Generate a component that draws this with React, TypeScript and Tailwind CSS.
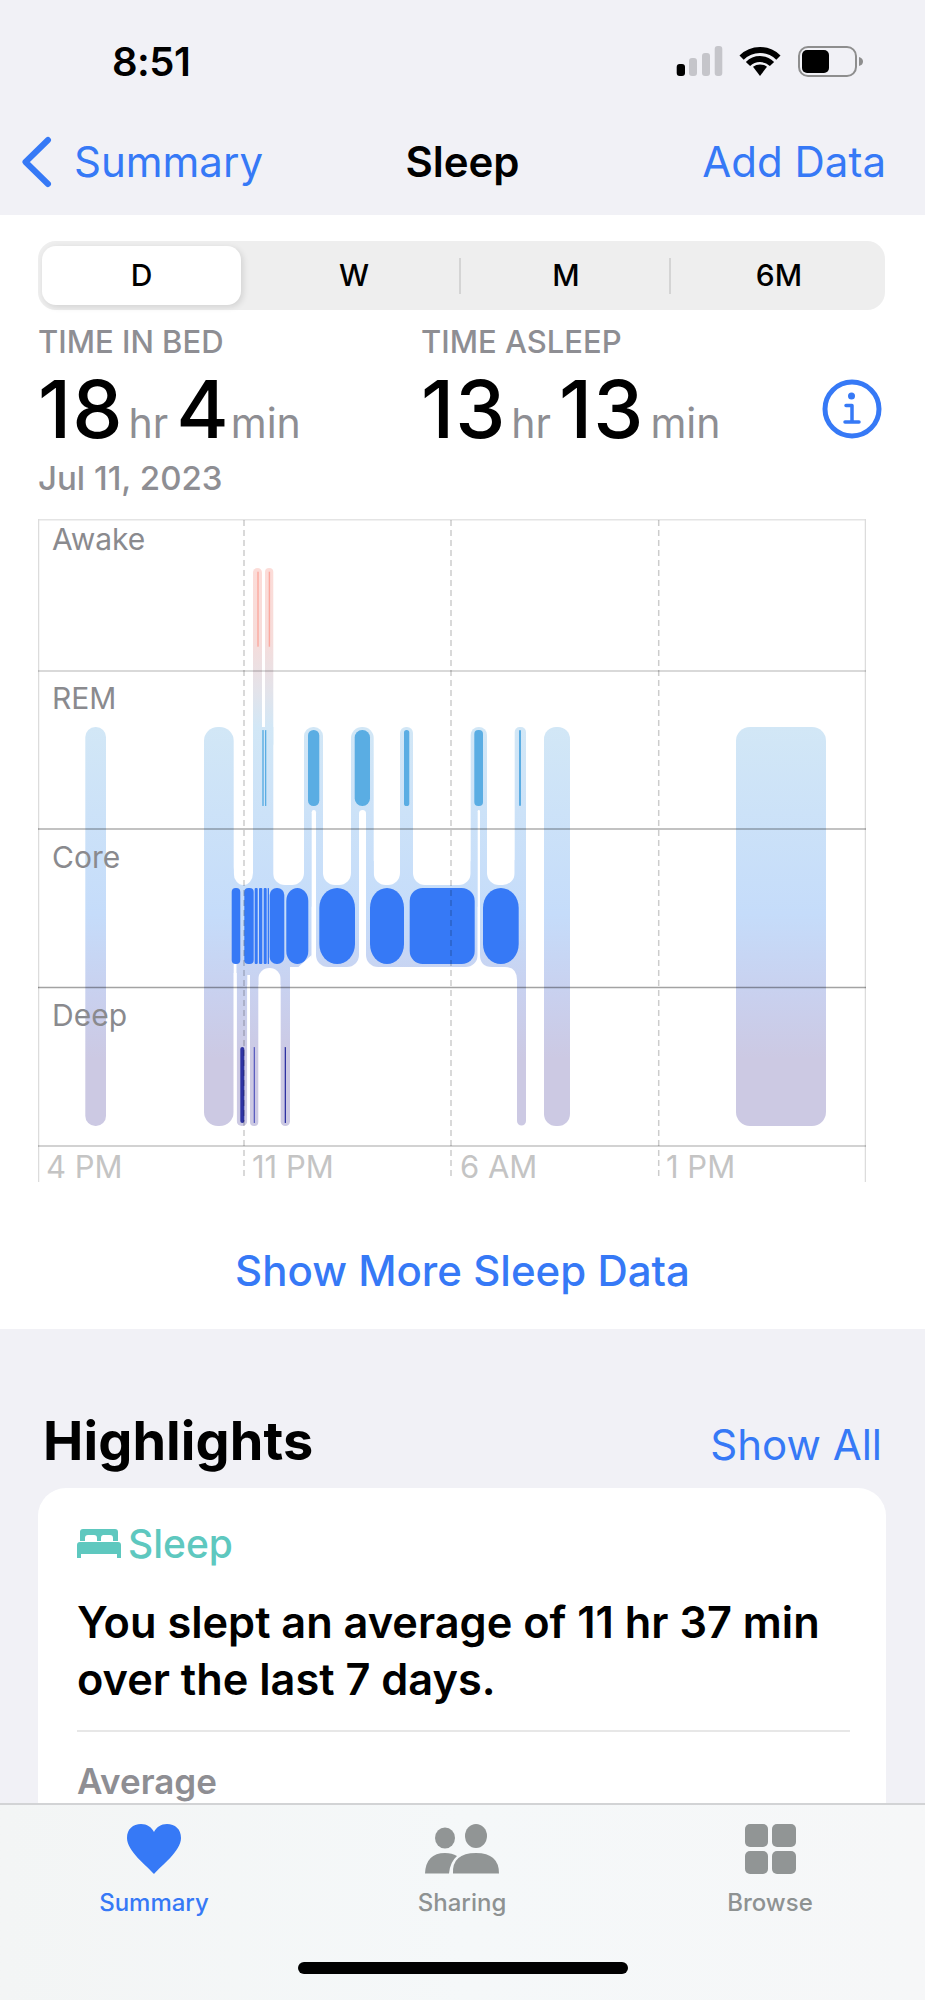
const BLUE = "#3679f6";

// [x1, x2, radius] — page-coordinates, the svg's viewBox matches the page
const coreBars = [
  [231.7, 240.3, 4],
  [244.3, 253.7, 4],
  [254.7, 257.7, 1],
  [259, 262.3, 1],
  [263.7, 266.7, 1],
  [267.7, 269, 0.5],
  [269.7, 284.3, 7],
  [286.3, 308.3, 13],
  [319.3, 355, 20],
  [370, 404, 20],
  [409.7, 474.7, 13],
  [483, 518.7, 20],
];

const remBars = [
  [262.3, 263.7, 0.5],
  [265, 266.3, 0.5],
  [308, 319.3, 5.5],
  [354.7, 370, 7.5],
  [404, 409.3, 2.6],
  [474.3, 483, 4],
  [519, 521, 1],
];

const deepBars = [
  [240.3, 244.3, 2, "#2e33a3"],
  [253.7, 255, 0.5, "#5c5fc0"],
  [284.7, 286, 0.5, "#2e33a3"],
] as const;

const topColumns = [
  [304, 323, 9],
  [351, 373.7, 11],
  [400, 413, 6],
  [470.7, 487, 8],
  [514.7, 526, 5],
];

const cutouts = [
  [233.7, 253],
  [273, 304],
  [323, 351],
  [373.7, 400],
  [413, 470.7],
  [487, 514.7],
];

const slits = [
  [311.7, 316],
  [359, 366],
  [477.7, 480],
];

const SleepChart = () => (
  <svg className="absolute inset-0" width="828" height="663" viewBox="38 519 828 663" fill="none">
    <defs>
      <linearGradient id="stage" gradientUnits="userSpaceOnUse" x1="0" y1="568" x2="0" y2="1126">
        <stop offset="0" stopColor="#fcdcd8" />
        <stop offset="0.13" stopColor="#f6dcda" />
        <stop offset="0.22" stopColor="#e3e3ea" />
        <stop offset="0.285" stopColor="#d2e7f6" />
        <stop offset="0.62" stopColor="#c5dcfa" />
        <stop offset="0.77" stopColor="#c9d0ee" />
        <stop offset="0.88" stopColor="#ccc9e3" />
        <stop offset="1" stopColor="#ccc9e3" />
      </linearGradient>
    </defs>

    {/* core band segments */}
    <g fill="url(#stage)">
      <rect x="233" y="860" width="78.7" height="107" rx="12" />
      <rect x="236.7" y="940" width="53.3" height="45" />
      <rect x="316" y="860" width="43" height="107" rx="12" />
      <rect x="366" y="860" width="111.7" height="107" rx="12" />
      <path d="M480 860H526V1121a4.5 4.5 0 0 1-9 0V980Q517 967 505 967H492Q480 967 480 955Z" />
    </g>
    <path d="M290 985V975Q298 967 311.7 955V985Z" fill="#fff" />

    <g fill="#fff">
      {cutouts.map(([a, b]) => (
        <rect key={a} x={a} y="770" width={b - a} height="115" rx="12" />
      ))}
      <rect x="258.3" y="968" width="22.4" height="60" rx="11" />
    </g>

    <g fill="url(#stage)">
      <rect x="236.7" y="960" width="10.6" height="166" rx="5" />
      <rect x="250" y="960" width="8.3" height="166" rx="4" />
      <rect x="280.7" y="960" width="9.3" height="166" rx="4.6" />
      <rect x="253" y="568" width="9" height="180" rx="4.5" />
      <rect x="265" y="568" width="8.3" height="180" rx="4.1" />
      <rect x="253" y="727" width="20.3" height="170" />
      {topColumns.map(([a, b, r]) => (
        <rect key={a} x={a} y="727" width={b - a} height="180" rx={r} />
      ))}
      <rect x="85.3" y="727" width="20.7" height="399" rx="10" />
      <rect x="204" y="727" width="29.7" height="399" rx="14" />
      <rect x="544" y="727" width="26" height="399" rx="12" />
      <rect x="736" y="727" width="90" height="399" rx="14" />
    </g>

    <g fill="#fff">
      {slits.map(([a, b]) => (
        <rect key={a} x={a} y="810" width={b - a} height="160" rx={(b - a) / 2} />
      ))}
      <rect x="233.7" y="973" width="3" height="160" />
      <rect x="247.3" y="975" width="2.7" height="160" />
    </g>

    {/* stage bars */}
    <rect x="257.3" y="571.7" width="1.4" height="75" fill="#fca99f" />
    <rect x="268.7" y="571.7" width="1.4" height="75" fill="#fca99f" />
    {remBars.map(([a, b, r]) => (
      <rect key={a} x={a} y="730" width={b - a} height="76" rx={r} fill="#5aade3" />
    ))}
    {coreBars.map(([a, b, r]) => (
      <rect key={a} x={a} y="888" width={b - a} height="76" rx={r} fill={BLUE} />
    ))}
    {deepBars.map(([a, b, r, c]) => (
      <rect key={a} x={a} y="1047" width={b - a} height="76" rx={r} fill={c} />
    ))}

    {/* grid */}
    <g strokeWidth="1.5">
      <path d="M38 519.5H866" stroke="#e4e4e4" strokeWidth="2" />
      <path d="M38.5 519V1182M865.5 519V1182" stroke="#dcdcdc" />
      <path d="M38 671H866" stroke="#000" strokeOpacity="0.2" />
      <path d="M38 829H866" stroke="#000" strokeOpacity="0.32" />
      <path d="M38 987.5H866" stroke="#000" strokeOpacity="0.36" />
      <path d="M38 1146H866" stroke="#000" strokeOpacity="0.24" />
      <path
        d="M244 520V1178M451 520V1178M658.7 520V1178"
        stroke="#000"
        strokeOpacity="0.2"
        strokeDasharray="6 4"
      />
    </g>
  </svg>
);

// value, unit, gap between them (the 4 sits tighter than the other digits)
const StatValue = ({ parts }: { parts: [string, string, string][] }) => (
  <div className="mt-[16px] flex items-baseline text-[80px] leading-[66px] font-medium tracking-[1px] text-black">
    {parts.map(([value, unit, gap]) => (
      <span key={unit} className="mr-[8px] flex items-baseline">
        <span>{value}</span>
        <span className={`${gap} text-[41px] font-normal tracking-[0px] text-[#8e8e93]`}>{unit}</span>
      </span>
    ))}
  </div>
);

const TabItem = ({ label, active, children }: { label: string; active?: boolean; children: React.ReactNode }) => (
  <div className="flex w-[308px] flex-col items-center">
    <div className="flex h-[50px] items-center">{children}</div>
    <span className={`mt-[13px] text-[24px] leading-[32px] font-medium ${active ? "text-[#3679f6]" : "text-[#8e9292]"}`}>
      {label}
    </span>
  </div>
);

export default function App() {
  return (
    <div className="flex h-[2000px] w-[925px] flex-col overflow-hidden bg-[#f1f1f6] font-['Inter',sans-serif]">
      {/* status + nav */}
      <header className="flex h-[215px] shrink-0 flex-col">
        <div className="flex h-[122px] items-start justify-between pt-[38px] pr-[61px] pl-[112px]">
          <span className="text-[40px] leading-[48px] font-semibold tracking-[-0.5px] text-black">8:51</span>
          <svg width="188" height="32" viewBox="676 46 188 32" className="mt-[8px]" fill="none">
            <rect x="676.7" y="64" width="8.3" height="12" rx="3" fill="#000" />
            <rect x="689" y="58" width="8" height="18" rx="3" fill="#c5c5ca" />
            <rect x="702" y="53" width="8" height="23" rx="3" fill="#c5c5ca" />
            <rect x="714.7" y="46" width="7.6" height="30" rx="3" fill="#c5c5ca" />
            <path d="M760 76L753 66.8A11.5 11.5 0 0 1 767 66.8Z" fill="#000" />
            <path d="M748 64A17 17 0 0 1 772 64M741.6 57.6A26 26 0 0 1 778.4 57.6" stroke="#000" strokeWidth="6" />
            <rect x="799" y="47" width="57" height="29" rx="9" stroke="#8e8e8e" strokeWidth="2" />
            <rect x="802" y="50" width="27" height="23" rx="5" fill="#000" />
            <path d="M859 57Q863 58 863 61.5T859 66Z" fill="#8e8e8e" />
          </svg>
        </div>
        <nav className="grid h-[93px] grid-cols-3 items-start px-[22px] pt-[14px] text-[42px] leading-[52px] text-[#3679f6]">
          <div className="flex items-center gap-[22px]">
            <svg width="30" height="52" viewBox="0 0 30 52" fill="none">
              <path d="M26 4L3.500 26L26 48" stroke="#3679f6" strokeWidth="6" strokeLinecap="round" strokeLinejoin="round" />
            </svg>
            <span>Summary</span>
          </div>
          <span className="text-center font-semibold text-black">Sleep</span>
          <span className="pr-[17px] text-right">Add Data</span>
        </nav>
      </header>

      <main className="min-h-0 flex-1 overflow-hidden">
        {/* sleep panel */}
        <section className="h-[1114px] bg-white pt-[26px] pl-[38px]">
          <div className="flex h-[69px] w-[847px] items-center rounded-[18px] bg-[#eeeeee] px-[4px] text-[30px] font-[450] text-black">
            <div className="flex h-[59px] w-[200px] items-center justify-center rounded-[14px] bg-white shadow-[2px_2px_6px_rgba(0,0,0,0.12)]">
              D
            </div>
            <div className="flex w-[219px] items-center justify-center pl-[8px]">W</div>
            <div className="flex h-[36px] w-[211px] items-center justify-center border-l-2 border-[#d4d4d4] pl-[2px]">M</div>
            <div className="flex h-[36px] w-[213px] items-center justify-center border-l-2 border-[#d4d4d4] pl-[6px]">6M</div>
          </div>

          <div className="mt-[14px] flex">
            <div className="w-[383px]">
              <div className="text-[31px] leading-[36px] font-medium text-[#8e8e93]">TIME IN BED</div>
              <StatValue parts={[["18", "hr", "ml-[5px]"], ["4", "min", "ml-[1px]"]]} />
            </div>
            <div className="w-[401px]">
              <div className="text-[31px] leading-[36px] font-medium text-[#8e8e93]">TIME ASLEEP</div>
              <StatValue parts={[["13", "hr", "ml-[5px]"], ["13", "min", "ml-[6px]"]]} />
            </div>
            <svg width="60" height="60" viewBox="0 0 60 60" className="mt-[55px]" fill="none">
              <circle cx="30" cy="30" r="27" stroke="#3679f6" strokeWidth="5" />
              <circle cx="29.500" cy="17" r="3.500" fill="#3679f6" />
              <path d="M24 26.500H30V42.500M23 43H37" stroke="#3679f6" strokeWidth="3.500" strokeLinecap="round" strokeLinejoin="round" />
            </svg>
          </div>
          <div className="text-[33px] leading-[44px] font-medium text-[#8e8e93]">Jul 11, 2023</div>

          <div className="relative mt-[19px] h-[663px] w-[828px]">
            <SleepChart />
            <div className="relative flex flex-col pl-[14px] text-[30px] leading-[36px] text-[#8a8a8e]">
              <div className="h-[152px] pt-[2px]">Awake</div>
              <div className="h-[158px] pt-[9px]">REM</div>
              <div className="h-[158px] pt-[10px]">Core</div>
              <div className="h-[159px] pt-[10px]">Deep</div>
            </div>
            <div className="relative grid grid-cols-[206px_207px_207px_208px] pt-[3px] text-[31px] leading-[36px] text-[#c4c4c4]">
              <span className="pl-[8px]">4 PM</span>
              <span className="pl-[8px]">11 PM</span>
              <span className="pl-[9px]">6 AM</span>
              <span className="pl-[8px]">1 PM</span>
            </div>
          </div>

          <div className="-ml-[38px] pt-[63px] text-center text-[42px] leading-[52px] font-medium text-[#3679f6]">
            Show More Sleep Data
          </div>
        </section>

        {/* highlights */}
        <section className="px-[38px] pt-[80px]">
          <div className="flex items-baseline justify-between pr-[5px] pl-[5px]">
            <h2 className="text-[54px] leading-[64px] font-bold tracking-[0.1px] text-black">Highlights</h2>
            <span className="text-[42px] leading-[52px] text-[#3679f6]">Show All</span>
          </div>
          <div className="mt-[15px] h-[400px] w-[848px] rounded-t-[28px] bg-white px-[39px] pt-[34px]">
            <div className="flex items-center gap-[7px] text-[#5ec8bf]">
              <svg width="44" height="30" viewBox="0 0 44 30" fill="none">
                <path d="M6 0H38A3 3 0 0 1 41 3V12H36V9A3 3 0 0 0 33 6H26A3 3 0 0 0 24 9V12H20V9A3 3 0 0 0 17 6H11A3 3 0 0 0 8 9V12H3V3A3 3 0 0 1 6 0Z" fill="#5ec8bf" />
                <path d="M3 13H41A3 3 0 0 1 44 16V25H0V16A3 3 0 0 1 3 13ZM0 25H4V29H0ZM40 25H44V29H40Z" fill="#5ec8bf" />
              </svg>
              <span className="text-[39px] leading-[44px] font-medium">Sleep</span>
            </div>
            <p className="mt-[28px] text-[43.300px] leading-[57px] font-semibold text-black">
              You slept an average of 11 hr 37 min
              <br />
              over the last 7 days.
            </p>
            <div className="mt-[22px] h-[2px] w-[773px] bg-[#e7e7e7]" />
            <div className="mt-[29px] text-[35px] leading-[40px] font-semibold text-[#8e8e93]">Average</div>
          </div>
        </section>
      </main>

      {/* tab bar */}
      <footer className="flex h-[197px] shrink-0 flex-col border-t-2 border-[#d2d3d5] bg-gradient-to-r from-[#f3f5f5] via-[#f5f8f9] to-[#f6f7f8]">
        <div className="flex pt-[19px]">
          <TabItem label="Summary" active>
            <svg width="54" height="50" viewBox="0 0 54 50">
              <path d="M27 50C20 42 0 27 0 14C0 5 6 0 14 0C20 0 24.500 3 27 8C29.500 3 34 0 40 0C48 0 54 5 54 14C54 27 34 42 27 50Z" fill="#3679f6" />
            </svg>
          </TabItem>
          <TabItem label="Sharing">
            <svg width="74" height="50" viewBox="425 1823 74 50" fill="#919595">
              <ellipse cx="445" cy="1837" rx="10" ry="10.500" />
              <ellipse cx="476" cy="1835" rx="11" ry="12" />
              <path d="M453 1872.500Q452 1852 476 1852Q499 1852 499 1872.500Z" />
              <path d="M425 1872.500Q426 1852 445 1852Q452 1852 457 1855Q450 1861 449 1872.500Z" />
            </svg>
          </TabItem>
          <TabItem label="Browse">
            <svg width="51" height="50" viewBox="0 0 51 50" fill="#919595">
              <rect x="0" y="0" width="23" height="23" rx="5" />
              <rect x="27" y="0" width="24" height="23" rx="5" />
              <rect x="0" y="27" width="23" height="23" rx="5" />
              <rect x="27" y="27" width="24" height="23" rx="5" />
            </svg>
          </TabItem>
        </div>
        <div className="mx-auto mt-[43px] h-[12px] w-[330px] rounded-full bg-black" />
      </footer>
    </div>
  );
}
